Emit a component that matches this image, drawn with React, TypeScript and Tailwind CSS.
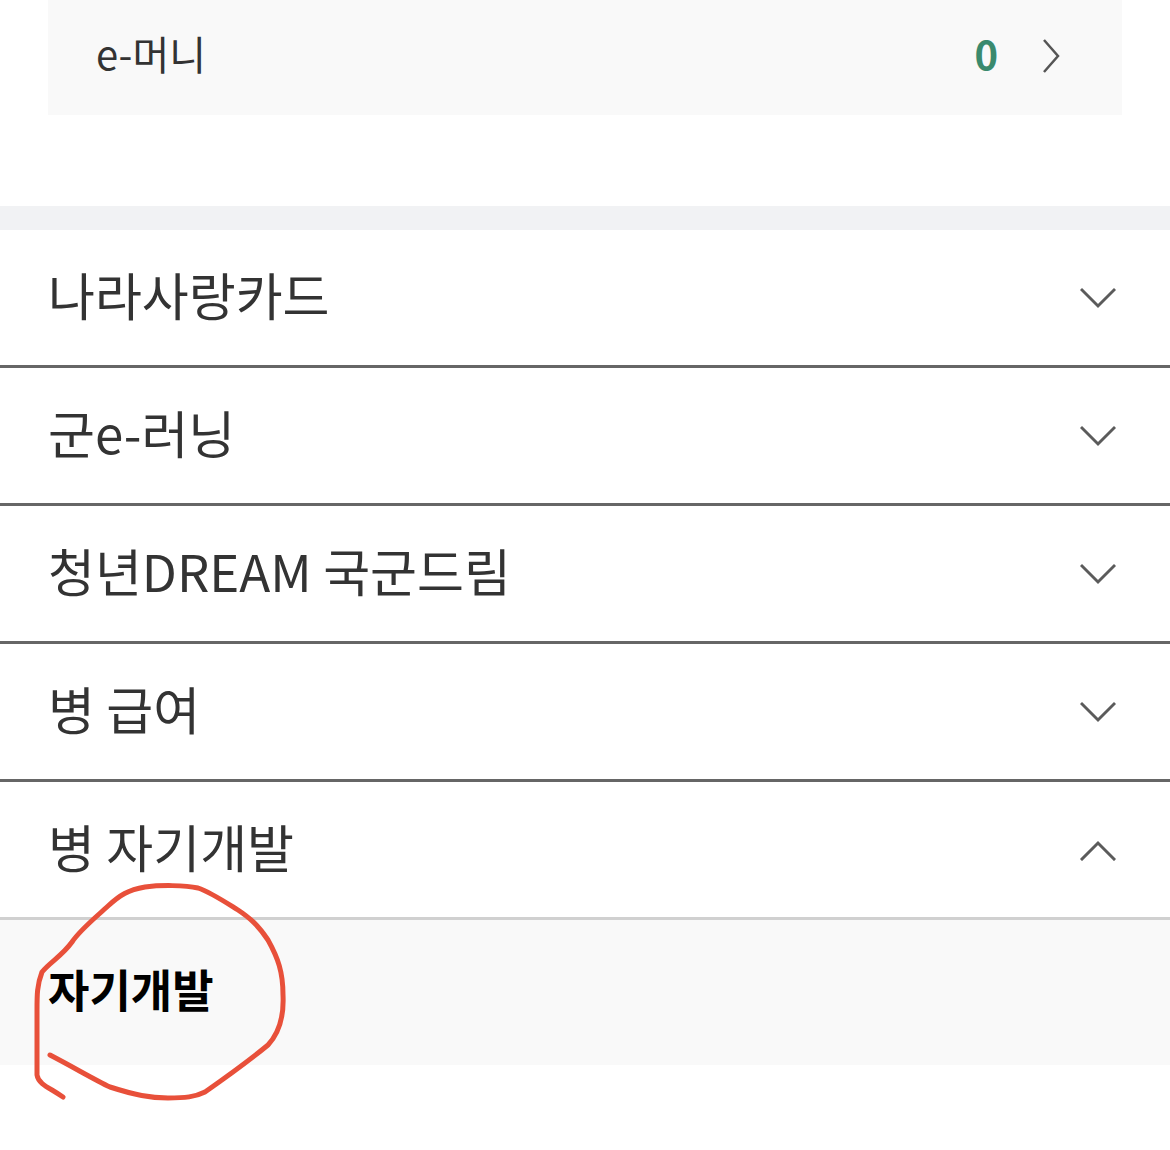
const items = [
  { label: "나라사랑카드", open: false },
  { label: "군e-러닝", open: false },
  { label: "청년DREAM 국군드림", open: false },
  { label: "병 급여", open: false },
  { label: "병 자기개발", open: true },
];

function Chevron({ up }: { up?: boolean }) {
  return (
    <svg width="36" height="22" viewBox="0 0 36 22" fill="none" className="shrink-0">
      <path
        d={up ? "M2 20 L18 4 L34 20" : "M2 3 L18 19 L34 3"}
        stroke="#5b5b5b"
        strokeWidth="3"
        strokeLinecap="square"
      />
    </svg>
  );
}

export default function App() {
  return (
    <div
      className="relative w-[1170px] h-[1150px] bg-white overflow-hidden text-[#333]"
      style={{ fontFamily: '"Noto Sans CJK KR", "Noto Sans", sans-serif' }}
    >
      {/* e-money card */}
      <div className="mx-12 h-[115px] bg-[#f9f9f9] flex items-center justify-between pl-[48px] pr-[62px]">
        <span className="text-[40px] leading-none -mt-[10px]">e-머니</span>
        <div className="flex items-center gap-[44px] -mt-[4px]">
          <span className="text-[40px] font-semibold text-[#3a8a6e] leading-none -mt-[6px]">0</span>
          <svg width="18" height="36" viewBox="0 0 18 36" fill="none">
            <path d="M2 2 L16 18 L2 34" stroke="#555" strokeWidth="2.5" />
          </svg>
        </div>
      </div>

      <div className="h-[91px]" />
      <div className="h-6 bg-[#f1f2f4]" />

      {/* accordion */}
      <ul>
        {items.map((item) => (
          <li key={item.label}>
            <div
              className={`h-[138px] flex items-center justify-between pl-12 pr-[54px] border-b-[3px] ${
                item.open ? "border-[#d0d0d0]" : "border-[#666]"
              }`}
            >
              <span className="text-[51px] leading-none -mt-[6px]">{item.label}</span>
              <Chevron up={item.open} />
            </div>
            {item.open && (
              <div className="h-[145px] bg-[#f9f9f9] flex items-center pl-12">
                <span className="text-[45px] font-bold text-black leading-none -mt-[8px]">자기개발</span>
              </div>
            )}
          </li>
        ))}
      </ul>

      {/* hand-drawn annotation */}
      <svg className="absolute left-0 top-0 pointer-events-none" width="1170" height="1150">
        <path
          d="M50 1055 C 75 1068, 95 1080, 110 1087 C 135 1095, 150 1098, 168 1098 C 185 1098, 195 1097, 205 1092 C 225 1078, 245 1064, 268 1045 C 280 1032, 284 1015, 283 995 C 283 972, 278 958, 268 940 C 258 925, 250 918, 238 910 C 222 900, 210 892, 198 888 C 185 885, 160 885, 145 887 C 128 890, 120 895, 108 906 C 95 918, 80 930, 72 942 C 62 956, 50 962, 42 972 C 37 985, 37 995, 37 1010 L 37 1075 C 38 1082, 45 1086, 52 1090 C 57 1093, 60 1095, 63 1097"
          stroke="#e8503a"
          strokeWidth="5"
          fill="none"
          strokeLinecap="round"
          strokeLinejoin="round"
        />
      </svg>
    </div>
  );
}
